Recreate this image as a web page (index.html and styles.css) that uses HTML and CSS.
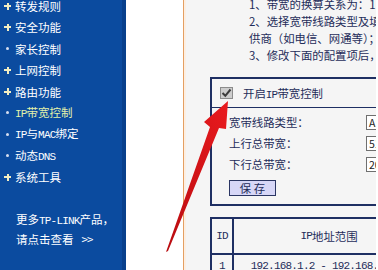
FILE: index.html
```html
<!DOCTYPE html>
<html lang="zh-CN">
<head>
<meta charset="utf-8">
<title>IP带宽控制</title>
<link rel="stylesheet" href="styles.css">
</head>
<body>
<div class="page">
  <nav class="sidebar">
    <ul class="menu">
      <li class="item"><span class="mark"><span class="plus"></span></span><span class="label">转发规则</span></li>
      <li class="item"><span class="mark"><span class="plus"></span></span><span class="label">安全功能</span></li>
      <li class="item"><span class="mark"><span class="dot"></span></span><span class="label">家长控制</span></li>
      <li class="item"><span class="mark"><span class="plus"></span></span><span class="label">上网控制</span></li>
      <li class="item"><span class="mark"><span class="plus"></span></span><span class="label">路由功能</span></li>
      <li class="item active"><span class="mark"><span class="dot"></span></span><span class="label"><span class="lat">IP</span>带宽控制</span></li>
      <li class="item"><span class="mark"><span class="dot"></span></span><span class="label"><span class="lat">IP</span>与<span class="lat">MAC</span>绑定</span></li>
      <li class="item"><span class="mark"><span class="dot"></span></span><span class="label">动态<span class="lat">DNS</span></span></li>
      <li class="item"><span class="mark"><span class="plus"></span></span><span class="label">系统工具</span></li>
    </ul>
    <div class="promo">
      <div>更多<span class="lat">TP-LINK</span>产品，</div>
      <div>请点击查看<span class="more">&gt;&gt;</span></div>
    </div>
  </nav>
  <div class="spacer"></div>
  <div class="rule"></div>
  <main class="content">
    <div class="notes">
      <p>1、带宽的换算关系为：1Mbps = 1000Kbps；</p>
      <p>2、选择宽带线路类型及填写带宽大小时，请根据实际情况进行选择和填写，如不清楚，请咨询您的带宽提</p>
      <p>供商（如电信、网通等）；</p>
      <p>3、修改下面的配置项后，请按“保存”按钮，使配置项生效。</p>
    </div>
    <section class="panel">
      <div class="panel-head">
        <span class="checkbox"><svg width="11" height="10" viewBox="0 0 11 10"><path d="M1.5 5 L4.3 7.8 L9.5 1.5" fill="none" stroke="#3c3c3c" stroke-width="2"/></svg></span>
        <span>开启<span class="lat">IP</span>带宽控制</span>
      </div>
      <div class="panel-body">
        <div class="field"><span>宽带线路类型：</span><span class="input">ADSL线路</span></div>
        <div class="field"><span>上行总带宽：</span><span class="input">512</span></div>
        <div class="field"><span>下行总带宽：</span><span class="input">2048</span></div>
        <button class="save" type="button">保 存</button>
      </div>
    </section>
    <div class="table">
      <div class="cell head"><span class="lat">ID</span></div>
      <div class="cell head"><span class="lat">IP</span>地址范围</div>
      <div class="cell head">端口</div>
      <div class="cell"><span class="lat">1</span></div>
      <div class="cell"><span class="lat">192.168.1.2 - 192.168.1.100</span></div>
      <div class="cell"></div>
    </div>
  </main>
  <svg class="arrow" width="378" height="270" viewBox="0 0 378 270">
    <defs>
      <linearGradient id="ar" x1="0" y1="1" x2="1" y2="0">
        <stop offset="0" stop-color="#b80c10"/>
        <stop offset="1" stop-color="#ea1a1e"/>
      </linearGradient>
    </defs>
    <polygon points="166,252 210,127 204,122 228,101 226,129 219,128 168,251" fill="url(#ar)"/>
  </svg>
</div>
</body>
</html>
```
FILE: styles.css
```css
html, body {
  margin: 0;
  padding: 0;
}

body {
  width: 378px;
  height: 270px;
  overflow: hidden;
  background: #ffffff;
  font-family: "Noto Sans CJK SC", sans-serif;
}

.page {
  position: relative;
  display: flex;
  width: 378px;
  height: 270px;
  overflow: hidden;
}

/* ---------- sidebar ---------- */
.sidebar {
  flex: 0 0 122px;
  background: #0b4b9f;
  border-right: 4px solid #08408c;
  color: #ffffff;
  font-size: 11.5px;
}

.menu {
  list-style: none;
  margin: -4.7px 0 0;
  padding: 0;
}

.item {
  display: flex;
  align-items: center;
  height: 21.375px;
  line-height: 14px;
  white-space: nowrap;
}

.mark {
  flex: 0 0 15px;
  display: flex;
  align-items: center;
}

.plus {
  position: relative;
  width: 7px;
  height: 7px;
  margin-left: 4px;
}

.plus::before,
.plus::after {
  content: "";
  position: absolute;
  background: #f3eec2;
}

.plus::before {
  left: 0;
  top: 2.5px;
  width: 7px;
  height: 2px;
}

.plus::after {
  left: 2.5px;
  top: 0;
  width: 2px;
  height: 7px;
}

.dot {
  width: 3px;
  height: 3px;
  margin-left: 6px;
  border-radius: 50%;
  background: #d6def0;
}

.item.active .label {
  color: #e2f2aa;
}

.lat {
  font-family: "Liberation Mono", monospace;
  font-size: 11px;
  letter-spacing: -0.8px;
}

.promo {
  margin-top: 22.3px;
  padding-left: 16px;
  line-height: 18px;
  white-space: nowrap;
}

.more {
  margin-left: 8px;
  letter-spacing: -1px;
}

/* ---------- separator ---------- */
.spacer {
  flex: 0 0 57px;
  background: #ffffff;
}

.rule {
  flex: 0 0 1px;
  background: #e49f62;
}

/* ---------- content ---------- */
.content {
  flex: 0 0 192px;
  box-sizing: border-box;
  border-left: 2px solid #fcefe3;
  background: #f5f5f5;
  overflow: hidden;
  color: #1f2d5a;
  font-size: 11.4px;
}

.notes {
  margin-top: -4px;
  padding-left: 63px;
  line-height: 17px;
  white-space: nowrap;
}

.notes p {
  margin: 0;
}

.panel {
  width: 240px;
  margin: 13px 0 0 24px;
  border: 2px solid #1e2f63;
}

.panel-head {
  display: flex;
  align-items: center;
  gap: 10px;
  height: 28px;
  padding-left: 8px;
  border-bottom: 1px solid #1e2f63;
  white-space: nowrap;
}

.checkbox {
  display: flex;
  align-items: center;
  justify-content: center;
  box-sizing: border-box;
  width: 13px;
  height: 12px;
  border: 1px solid #8c8c8c;
  background: #cdcdcd;
}

.panel-body {
  padding: 3.5px 0 8px 17px;
}

.field {
  display: grid;
  grid-template-columns: 137px auto;
  align-items: center;
  height: 21px;
  white-space: nowrap;
}

.input {
  box-sizing: border-box;
  width: 90px;
  height: 15px;
  padding-left: 2px;
  border: 1px solid #6f6f6f;
  background: #ffffff;
  font-size: 10.5px;
  line-height: 13px;
  color: #222222;
}

.save {
  display: block;
  box-sizing: border-box;
  width: 47px;
  height: 16px;
  margin-top: 5.5px;
  padding: 0;
  border: 1px solid #2b3663;
  background: #d7d7f7;
  color: #1f2d5a;
  font-family: inherit;
  font-size: 11.4px;
  line-height: 14px;
}

.table {
  display: grid;
  grid-template-columns: 22px 192px 80px;
  grid-template-rows: 36px 24px;
  width: 300px;
  margin: 11px 0 0 24px;
  border-top: 2px solid #1e2f63;
  border-left: 2px solid #1e2f63;
}

.cell {
  display: flex;
  align-items: center;
  justify-content: center;
  box-sizing: border-box;
  border-right: 2px solid #1e2f63;
  border-bottom: 2px solid #1e2f63;
  white-space: nowrap;
}

/* ---------- overlay arrow ---------- */
.arrow {
  position: absolute;
  left: 0;
  top: 0;
  pointer-events: none;
}
```
